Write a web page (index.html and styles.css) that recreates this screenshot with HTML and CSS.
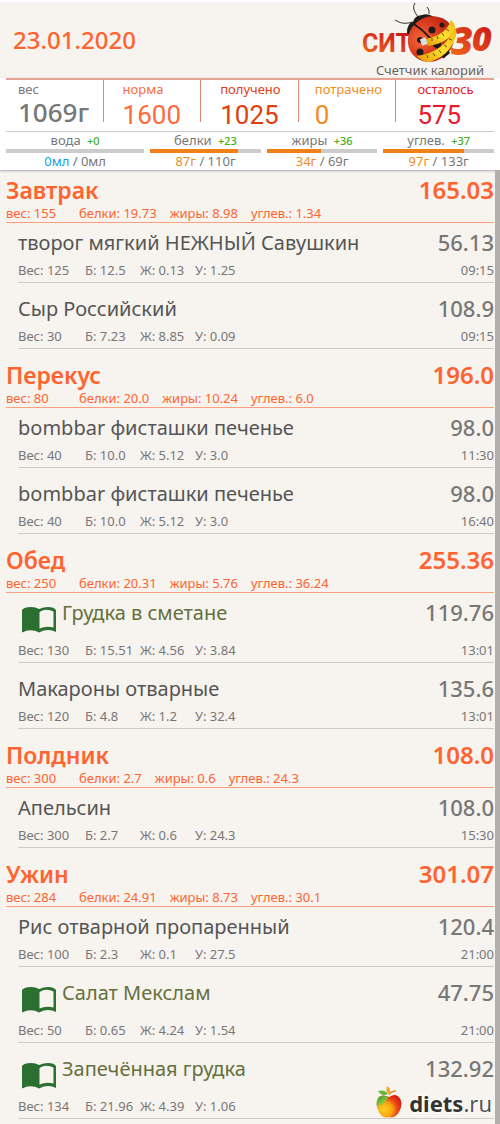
FILE: index.html
```html
<!DOCTYPE html>
<html lang="ru">
<head>
<meta charset="utf-8">
<meta name="viewport" content="width=device-width, initial-scale=1">
<title>Счетчик калорий</title>
<link rel="stylesheet" href="styles.css">
</head>
<body>
<svg class="defs" width="0" height="0" aria-hidden="true">
  <symbol id="book" viewBox="0 0 34 26">
    <path fill="#2b7031" fill-rule="evenodd" d="M0 3Q2 0 9 0Q14 0 17 2Q22 0 26 0Q32 0 34 3V25Q26 21 17 25.500Q9 21 0 25.500ZM17.500 5V21.500Q24 18.500 31.500 20.500V4.500Q24 1 17.500 5Z"/>
  </symbol>
</svg>
<header class="top">
  <h1 class="date">23.01.2020</h1>
  <div class="brand">
    <svg class="logo" viewBox="0 0 136 60" role="img" aria-label="СИТ 30">
      <defs>
        <linearGradient id="warm" x1="0" y1="1" x2="0.6" y2="0"><stop offset="0" stop-color="#f47a16"/><stop offset=".5" stop-color="#e2451c"/><stop offset="1" stop-color="#cb1a18"/></linearGradient>
        <radialGradient id="shell" cx=".35" cy=".35" r=".75"><stop offset="0" stop-color="#f26a3c"/><stop offset=".5" stop-color="#d93a1c"/><stop offset="1" stop-color="#a81510"/></radialGradient>
        <linearGradient id="tape" x1="0" y1="1" x2="1" y2="0"><stop offset="0" stop-color="#e39a08"/><stop offset=".5" stop-color="#ffe02e"/><stop offset="1" stop-color="#efb713"/></linearGradient>
      </defs>
      <text class="logo-text" x="2" y="50" fill="url(#warm)">СИТ</text>
      <text class="logo-num" y="53" fill="url(#warm)"><tspan class="three" x="91">3</tspan><tspan x="112" y="49">0</tspan></text>
      <g fill="none" stroke="#333" stroke-width="1">
        <path d="M53 20Q43 23 37 19M37 19L35 18M58 15Q51 6 55 1M69 12Q70 8 67 5"/>
      </g>
      <path fill="#201c1b" d="M47 31Q47 21 53 20Q54 14 62 13Q68 11 74 15L66 25L50 33Z"/>
      <ellipse cx="71" cy="37" rx="24" ry="22" transform="rotate(-40 71 37)" fill="url(#shell)"/>
      <path d="M54 22Q70 32 84 56" fill="none" stroke="#2a1411" stroke-width="2"/>
      <g fill="#211a19"><circle cx="72" cy="28" r="3.500"/><circle cx="82" cy="23" r="2.500"/><circle cx="60" cy="38" r="3"/><circle cx="60" cy="50" r="3.500"/><circle cx="77" cy="42" r="4"/><path d="M82 52l6-4 2 3-6 5Z"/></g>
      <path d="M66 37Q86 33 91 18Q95 21 95 26Q90 41 68 44Z" fill="url(#tape)"/>
      <path d="M57 54Q85 50 95 25Q97 30 96 34Q90 54 69 60Q61 59 57 54Z" fill="url(#tape)"/>
      <path d="M72 36v3M77 34l1 3M82 31l2 3M86 27l3 2M67 53l1 3M73 51l2 3M79 48l2 3M84 43l3 2M89 37l3 1" stroke="#6d4b09" stroke-width="1"/>
      <rect x="61" y="36" width="6" height="7" rx="1" transform="rotate(-20 64 40)" fill="#ddd"/>
    </svg>
    <p class="tagline">Счетчик калорий</p>
  </div>
</header>
<section class="summary">
  <dl class="stats">
    <div class="stat weight"><dt>вес</dt><dd>1069г</dd></div>
    <div class="stat norm"><dt>норма</dt><dd>1600</dd></div>
    <div class="stat eaten"><dt>получено</dt><dd>1025</dd></div>
    <div class="stat spent"><dt>потрачено</dt><dd>0</dd></div>
    <div class="stat left"><dt>осталось</dt><dd>575</dd></div>
  </dl>
  <div class="goals">
    <div class="goal water"><p class="goal-name">вода <b>+0</b></p><div class="bar"><div class="fill" style="width:0%"></div></div><p class="goal-value"><em>0мл</em> / 0мл</p></div>
    <div class="goal"><p class="goal-name">белки <b>+23</b></p><div class="bar"><div class="fill" style="width:79%"></div></div><p class="goal-value"><em>87г</em> / 110г</p></div>
    <div class="goal"><p class="goal-name">жиры <b>+36</b></p><div class="bar"><div class="fill" style="width:49%"></div></div><p class="goal-value"><em>34г</em> / 69г</p></div>
    <div class="goal"><p class="goal-name">углев. <b>+37</b></p><div class="bar"><div class="fill" style="width:73%"></div></div><p class="goal-value"><em>97г</em> / 133г</p></div>
  </div>
</section>
<main class="diary">
  <section class="meal">
    <header class="meal-head"><div class="line"><h2>Завтрак</h2><span class="kcal">165.03</span></div><p class="totals"><span>вес: 155</span><span>белки: 19.73</span><span>жиры: 8.98</span><span>углев.: 1.34</span></p></header>
    <ul class="foods">
      <li class="food"><div class="line"><h3>творог мягкий НЕЖНЫЙ Савушкин</h3><span class="kcal">56.13</span></div><div class="facts"><span>Вес: 125</span><span>Б: 12.5</span><span>Ж: 0.13</span><span>У: 1.25</span><time>09:15</time></div></li>
      <li class="food"><div class="line"><h3>Сыр Российский</h3><span class="kcal">108.9</span></div><div class="facts"><span>Вес: 30</span><span>Б: 7.23</span><span>Ж: 8.85</span><span>У: 0.09</span><time>09:15</time></div></li>
    </ul>
  </section>
  <section class="meal">
    <header class="meal-head"><div class="line"><h2>Перекус</h2><span class="kcal">196.0</span></div><p class="totals"><span>вес: 80</span><span>белки: 20.0</span><span>жиры: 10.24</span><span>углев.: 6.0</span></p></header>
    <ul class="foods">
      <li class="food"><div class="line"><h3>bombbar фисташки печенье</h3><span class="kcal">98.0</span></div><div class="facts"><span>Вес: 40</span><span>Б: 10.0</span><span>Ж: 5.12</span><span>У: 3.0</span><time>11:30</time></div></li>
      <li class="food"><div class="line"><h3>bombbar фисташки печенье</h3><span class="kcal">98.0</span></div><div class="facts"><span>Вес: 40</span><span>Б: 10.0</span><span>Ж: 5.12</span><span>У: 3.0</span><time>16:40</time></div></li>
    </ul>
  </section>
  <section class="meal">
    <header class="meal-head"><div class="line"><h2>Обед</h2><span class="kcal">255.36</span></div><p class="totals"><span>вес: 250</span><span>белки: 20.31</span><span>жиры: 5.76</span><span>углев.: 36.24</span></p></header>
    <ul class="foods">
      <li class="food recipe"><div class="line"><svg class="book" aria-hidden="true"><use href="#book"/></svg><h3>Грудка в сметане</h3><span class="kcal">119.76</span></div><div class="facts"><span>Вес: 130</span><span>Б: 15.51</span><span>Ж: 4.56</span><span>У: 3.84</span><time>13:01</time></div></li>
      <li class="food"><div class="line"><h3>Макароны отварные</h3><span class="kcal">135.6</span></div><div class="facts"><span>Вес: 120</span><span>Б: 4.8</span><span>Ж: 1.2</span><span>У: 32.4</span><time>13:01</time></div></li>
    </ul>
  </section>
  <section class="meal">
    <header class="meal-head"><div class="line"><h2>Полдник</h2><span class="kcal">108.0</span></div><p class="totals"><span>вес: 300</span><span>белки: 2.7</span><span>жиры: 0.6</span><span>углев.: 24.3</span></p></header>
    <ul class="foods">
      <li class="food"><div class="line"><h3>Апельсин</h3><span class="kcal">108.0</span></div><div class="facts"><span>Вес: 300</span><span>Б: 2.7</span><span>Ж: 0.6</span><span>У: 24.3</span><time>15:30</time></div></li>
    </ul>
  </section>
  <section class="meal">
    <header class="meal-head"><div class="line"><h2>Ужин</h2><span class="kcal">301.07</span></div><p class="totals"><span>вес: 284</span><span>белки: 24.91</span><span>жиры: 8.73</span><span>углев.: 30.1</span></p></header>
    <ul class="foods">
      <li class="food"><div class="line"><h3>Рис отварной пропаренный</h3><span class="kcal">120.4</span></div><div class="facts"><span>Вес: 100</span><span>Б: 2.3</span><span>Ж: 0.1</span><span>У: 27.5</span><time>21:00</time></div></li>
      <li class="food recipe"><div class="line"><svg class="book" aria-hidden="true"><use href="#book"/></svg><h3>Салат Мекслам</h3><span class="kcal">47.75</span></div><div class="facts"><span>Вес: 50</span><span>Б: 0.65</span><span>Ж: 4.24</span><span>У: 1.54</span><time>21:00</time></div></li>
      <li class="food recipe"><div class="line"><svg class="book" aria-hidden="true"><use href="#book"/></svg><h3>Запечённая грудка</h3><span class="kcal">132.92</span></div><div class="facts"><span>Вес: 134</span><span>Б: 21.96</span><span>Ж: 4.39</span><span>У: 1.06</span></div></li>
    </ul>
  </section>
  <div class="watermark">
    <svg class="apple" viewBox="0 0 28 34" aria-hidden="true">
      <defs>
        <radialGradient id="skin" cx=".3" cy=".65" r=".75"><stop offset="0" stop-color="#ffd21c"/><stop offset=".45" stop-color="#f9a20f"/><stop offset=".7" stop-color="#ea4a18"/><stop offset="1" stop-color="#d81f12"/></radialGradient>
        <linearGradient id="green" x1="0" y1="0" x2=".7" y2="1"><stop offset="0" stop-color="#2f9a2c"/><stop offset=".7" stop-color="#8cc63c"/><stop offset="1" stop-color="#f2cf1d"/></linearGradient>
      </defs>
      <path d="M14 12Q20 8 24 12Q29 18 24 27Q20 34 14 32Q7 34 4 27Q-1 18 4 12Q8 9 14 12Z" fill="url(#skin)"/>
      <path d="M13 12Q7 9 4 12Q1 16 2 21Q9 21 13 12Z" fill="url(#green)"/>
      <path d="M3 6Q10 4 13 9Q7 12 3 6Z" fill="#6ab536"/>
      <path d="M12 1Q17 4 14 9Q10 6 12 1Z" fill="#f7a51c"/>
      <path d="M14 10Q16 6 21 6" stroke="#e88b2a" stroke-width="1.500" fill="none"/>
    </svg>
    <span class="site"><b>diets</b>.ru</span>
  </div>
</main>
</body>
</html>
```
FILE: styles.css
```css
* { box-sizing: border-box; margin: 0; padding: 0; }

body {
  background: #f7f3ef;
  color: #777;
  font-family: "Noto Sans", "Open Sans", sans-serif;
  font-size: 13px;
  line-height: 16px;
}

.defs { position: absolute; }

.top {
  display: flex;
  justify-content: space-between;
  border-top: 2px solid #fff;
  padding: 0 4px 0 13px;
}

.date {
  padding-top: 22px;
  color: #ff6430;
  font-size: 24px;
  font-weight: 500;
  line-height: 32px;
}

.brand { width: 136px; }
.logo { display: block; width: 136px; height: 60px; overflow: visible; }
.logo-text { font: 700 25px Roboto, sans-serif; }
.logo-num { font: italic 800 34px "Open Sans", sans-serif; }
.three { font-size: 38px; }
.tagline { padding-left: 16px; color: #666; font-size: 13px; line-height: 16px; white-space: nowrap; }

.summary {
  position: relative;
  padding: 0 6px;
  background: #fff;
  box-shadow: 0 1px 2px #aaa;
}

.stats {
  display: grid;
  grid-template-columns: repeat(5, 1fr);
  border-top: 2px solid #e5a193;
  border-bottom: 1px solid #ccc;
  padding-bottom: 9px;
}

.stat { height: 42px; padding-left: 19px; border-right: 1px solid #dc8877; }
.stat:last-child { border-right: 0; }
.stat dt { font-size: 13px; line-height: 18px; }
.stat dd { font: 400 26px/34px Roboto, sans-serif; }
.weight { padding-left: 12px; }
.weight dd { font: 500 26px/28px "Noto Sans", sans-serif; }
.norm { color: #ff6a3c; }
.eaten { color: #e04010; }
.spent { padding-left: 16px; color: #f58a20; }
.left { padding-left: 21px; color: #e8192c; }

.goals {
  display: grid;
  grid-template-columns: 5fr 4fr 4fr 4fr;
  gap: 6px;
  text-align: center;
}

.goal-name { line-height: 17px; }
.goal-name b { padding-left: 3px; color: #44ad20; font-size: 11px; font-weight: 500; }
.bar { height: 4px; background: #ccc; }
.fill { height: 4px; background: #f08018; }
.goal-value { line-height: 17px; }
.goal-value em { color: #f08a20; font-style: normal; }
.water em { color: #149fe6; }

.diary {
  position: relative;
  border-right: 5px solid #b2afac;
  padding: 0 1px 6px 6px;
}

.meal-head {
  height: 59px;
  padding-top: 12px;
  border-bottom: 1px solid #ff9f80;
  color: #ff6430;
}
.meal:first-child .meal-head { height: 53px; padding-top: 6px; }

.line { display: flex; justify-content: space-between; }
.meal-head .line { line-height: 28px; }
.meal-head h2 { font-size: 23px; font-weight: 600; }
.meal-head .kcal { font-size: 24px; font-weight: 600; }
.totals { display: flex; gap: 13px; line-height: 18px; }
.totals span:first-child { width: 60px; }

.foods { list-style: none; padding-left: 12px; }
.food { height: 66px; padding-top: 12px; border-bottom: 1px solid #ccc; }
.food:first-child { height: 60px; padding-top: 6px; }
.food .line { height: 30px; line-height: 28px; }
.food h3 { color: #555; font-size: 20px; font-weight: 400; white-space: nowrap; }
.food .kcal { font-size: 22px; font-weight: 500; line-height: 26px; }

.facts { display: flex; line-height: 22px; }
.facts span { min-width: 55px; padding-right: 7px; white-space: nowrap; }
.facts span:first-child { min-width: 67px; }
.facts time { margin-left: auto; }

.recipe { height: 76px; }
.recipe:first-child { height: 70px; }
.food.recipe .line { height: 40px; }
.recipe h3 { flex: 1; padding-left: 6px; color: #65703c; }
.book { width: 34px; height: 26px; margin: 8px 0 0 4px; }

.watermark {
  position: absolute;
  right: 3px;
  bottom: 6px;
  display: flex;
  align-items: flex-end;
  gap: 6px;
}
.apple { width: 28px; height: 34px; }
.site {
  color: #555;
  font-size: 22px;
  line-height: 32px;
  text-shadow: 0 0 3px #fff, 1px 1px 2px #fff, -1px -1px 2px #fff;
}
.site b { color: #333; font-weight: 700; }
```
